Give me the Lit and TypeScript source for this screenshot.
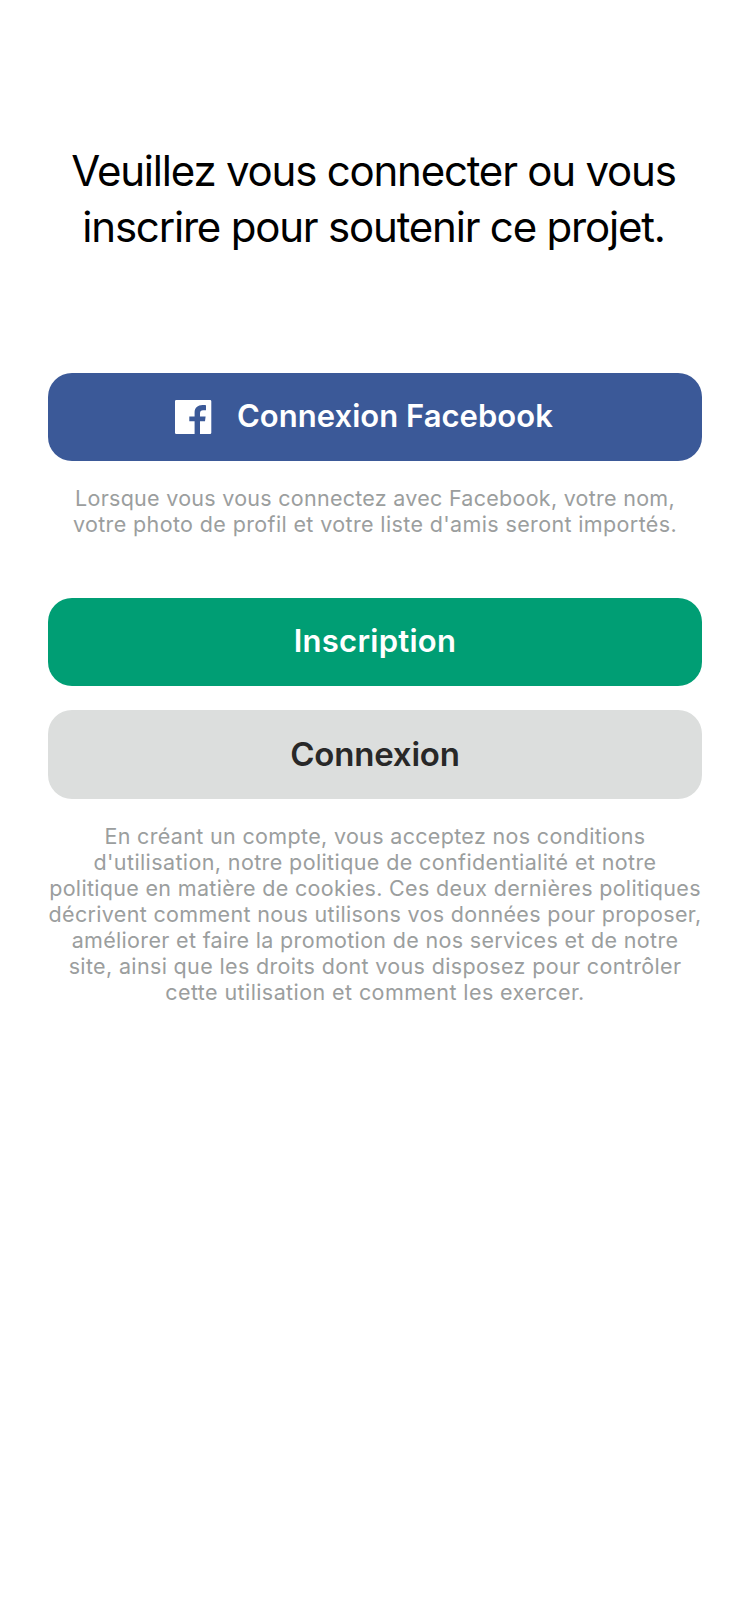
import { LitElement, html, css, svg } from "lit";
import { customElement } from "lit/decorators.js";

interface Line {
  text: string;
  tracking: number;
}

const HEADING: Line[] = [
  { text: "Veuillez vous connecter ou vous", tracking: -1.21 },
  { text: "inscrire pour soutenir ce projet.", tracking: -1.2 },
];

const FACEBOOK_NOTE: Line[] = [
  { text: "Lorsque vous vous connectez avec Facebook, votre nom,", tracking: 0.27 },
  { text: "votre photo de profil et votre liste d'amis seront importés.", tracking: 0.37 },
];

const TERMS: Line[] = [
  { text: "En créant un compte, vous acceptez nos conditions", tracking: 0.33 },
  { text: "d'utilisation, notre politique de confidentialité et notre", tracking: 0.39 },
  { text: "politique en matière de cookies. Ces deux dernières politiques", tracking: 0.318 },
  { text: "décrivent comment nous utilisons vos données pour proposer,", tracking: 0.325 },
  { text: "améliorer et faire la promotion de nos services et de notre", tracking: 0.325 },
  { text: "site, ainsi que les droits dont vous disposez pour contrôler", tracking: 0.352 },
  { text: "cette utilisation et comment les exercer.", tracking: 0.41 },
];

const facebookGlyph = svg`<path fill="#fff" fill-rule="evenodd"
  d="M1.3 0H35a1.3 1.3 0 0 1 1.3 1.3V32.7A1.3 1.3 0 0 1 35 34H25V21.3H30L30.6 16.4H25V13.4C25 11.3 26 10.2 28.1 10.2H31V5.2C30 5 28.9 4.9 27.5 4.9C22.8 4.9 19.6 7.7 19.6 12.4V16.4H14.3V21.3H19.6V34H1.3A1.3 1.3 0 0 1 0 32.7V1.3A1.3 1.3 0 0 1 1.3 0Z"/>`;

@customElement("app-root")
export class AppRoot extends LitElement {
  static styles = css`
    :host {
      display: block;
      min-height: 100vh;
      box-sizing: border-box;
      padding: 143px 48px 0;
      background: #fff;
      font-family: Inter, "Liberation Sans", sans-serif;
    }
    h1,
    p {
      margin: 0;
      text-align: center;
      white-space: nowrap;
      font-weight: 400;
    }
    h1 {
      padding-right: 3px;
      font-size: 42px;
      line-height: 56px;
      color: #000;
    }
    p {
      font-size: 21.5px;
      line-height: 26px;
      color: #9b9e9e;
    }
    .line {
      display: block;
    }
    button {
      display: flex;
      align-items: center;
      justify-content: center;
      width: 100%;
      height: 88px;
      box-sizing: border-box;
      border: 0;
      border-radius: 24px;
      padding: 0 0 2px;
      font: 560 31px/40px Inter, "Liberation Sans", sans-serif;
      color: #fff;
    }
    .facebook {
      justify-content: flex-start;
      gap: 25px;
      margin-top: 118px;
      padding-left: 127px;
      background: #3b5998;
      letter-spacing: 0.03px;
    }
    .facebook svg {
      width: 37px;
      height: 34px;
      margin-top: 2px;
    }
    .note {
      margin-top: 24px;
    }
    .signup {
      margin-top: 61px;
      background: #009e74;
      letter-spacing: 0.26px;
    }
    .login {
      height: 89px;
      margin-top: 24px;
      background: #dcdedd;
      color: #282828;
      font-size: 33px;
      letter-spacing: -0.2px;
    }
    .terms {
      margin-top: 24px;
    }
  `;

  private lines(lines: Line[]) {
    return lines.map(
      (l) => html`<span class="line" style="letter-spacing:${l.tracking}px">${l.text} </span>`
    );
  }

  render() {
    return html`
      <h1>${this.lines(HEADING)}</h1>
      <button class="facebook">
        <svg viewBox="0 0 37 34" aria-hidden="true">${facebookGlyph}</svg>
        <span>Connexion Facebook</span>
      </button>
      <p class="note">${this.lines(FACEBOOK_NOTE)}</p>
      <button class="signup">Inscription</button>
      <button class="login">Connexion</button>
      <p class="terms">${this.lines(TERMS)}</p>
    `;
  }
}
